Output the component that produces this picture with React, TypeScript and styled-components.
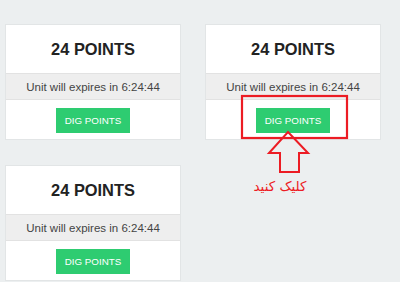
import React from "react";
import styled, { createGlobalStyle } from "styled-components";

const Global = createGlobalStyle`
  html, body { margin: 0; padding: 0; }
  body {
    background: #eceff0;
    font-family: "Liberation Sans", Arial, sans-serif;
  }
`;

const Page = styled.div`
  position: relative;
  width: 400px;
  height: 282px;
  box-sizing: border-box;
  padding: 24px 0 0 5px;
  background: #eceff0;
  overflow: hidden;
`;

const Grid = styled.div`
  display: grid;
  grid-template-columns: 176px 176px;
  column-gap: 24px;
  row-gap: 25px;
`;

const Card = styled.div`
  background: #ffffff;
  border: 1px solid #e2e5e6;
  display: flex;
  flex-direction: column;
`;

const Title = styled.div`
  height: 48px;
  display: flex;
  align-items: center;
  justify-content: center;
  font-weight: 700;
  font-size: 16.4px;
  color: #222222;
`;

const Expiry = styled.div`
  height: 25px;
  display: flex;
  align-items: center;
  justify-content: center;
  background: #eeeeee;
  border-top: 1px solid #e2e2e2;
  border-bottom: 1px solid #e2e2e2;
  font-size: 11.5px;
  color: #444444;
`;

const Actions = styled.div`
  display: flex;
  justify-content: center;
  padding: 8px 0 6px;
`;

const DigButton = styled.button`
  width: 74px;
  height: 25px;
  border: none;
  border-radius: 0;
  background: #2ecc71;
  color: #ffffff;
  font-family: "Liberation Sans", Arial, sans-serif;
  font-size: 9.8px;
  padding: 0;
  cursor: pointer;
`;

const Overlay = styled.svg`
  position: absolute;
  left: 0;
  top: 0;
  pointer-events: none;
`;

const Hint = styled.span`
  position: absolute;
  left: 250px;
  top: 178px;
  width: 60px;
  text-align: center;
  direction: rtl;
  font-family: "DejaVu Sans", sans-serif;
  font-size: 13.5px;
  color: #ec1c24;
  white-space: nowrap;
`;

const PointsCard: React.FC = () => (
  <Card>
    <Title>24 POINTS</Title>
    <Expiry>Unit will expires in 6:24:44</Expiry>
    <Actions>
      <DigButton>DIG POINTS</DigButton>
    </Actions>
  </Card>
);

export default function App() {
  return (
    <>
      <Global />
      <Page>
        <Grid>
          <PointsCard />
          <PointsCard />
          <PointsCard />
        </Grid>
        <Overlay width="400" height="282" viewBox="0 0 400 282">
          <rect x="242" y="96" width="105" height="42" fill="none" stroke="#ec1c24" strokeWidth="2.2" />
          <polygon
            points="288,132 308,153 299,153 299,172 280,172 280,153 269,153"
            fill="none"
            stroke="#ec1c24"
            strokeWidth="2"
            strokeLinejoin="miter"
          />
        </Overlay>
        <Hint>کلیک کنید</Hint>
      </Page>
    </>
  );
}
